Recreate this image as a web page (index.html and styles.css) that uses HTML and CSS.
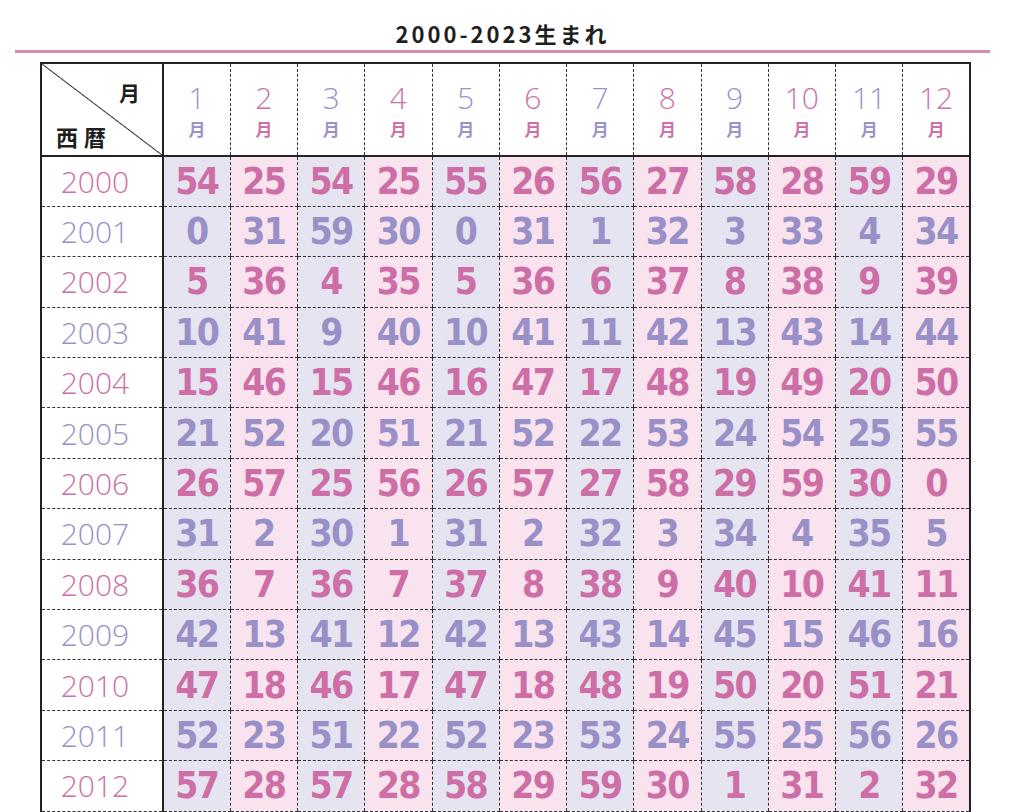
FILE: index.html
```html
<!DOCTYPE html>
<html lang="ja">
<head>
<meta charset="utf-8">
<title>2000-2023生まれ</title>
<link rel="stylesheet" href="styles.css">
</head>
<body>
<div class="page">
  <h1 class="title">2000-2023生まれ</h1>
  <div class="rule"></div>
  <table class="chart">
    <colgroup>
      <col class="c-year">
      <col class="c-m"><col class="c-m"><col class="c-m"><col class="c-m"><col class="c-m"><col class="c-m">
      <col class="c-m"><col class="c-m"><col class="c-m"><col class="c-m"><col class="c-m"><col class="c-m">
    </colgroup>
    <thead>
      <tr class="head">
        <th class="corner"><div class="corner-in"><span class="c-month">月</span><span class="c-year-l">西暦</span></div></th>
        <th class="mh pu"><span class="mn">1</span><span class="mk">月</span></th>
        <th class="mh pk"><span class="mn">2</span><span class="mk">月</span></th>
        <th class="mh pu"><span class="mn">3</span><span class="mk">月</span></th>
        <th class="mh pk"><span class="mn">4</span><span class="mk">月</span></th>
        <th class="mh pu"><span class="mn">5</span><span class="mk">月</span></th>
        <th class="mh pk"><span class="mn">6</span><span class="mk">月</span></th>
        <th class="mh pu"><span class="mn">7</span><span class="mk">月</span></th>
        <th class="mh pk"><span class="mn">8</span><span class="mk">月</span></th>
        <th class="mh pu"><span class="mn">9</span><span class="mk">月</span></th>
        <th class="mh pk"><span class="mn">10</span><span class="mk">月</span></th>
        <th class="mh pu"><span class="mn">11</span><span class="mk">月</span></th>
        <th class="mh pk"><span class="mn">12</span><span class="mk">月</span></th>
      </tr>
    </thead>
    <tbody>
      <tr class="r-pk"><th class="yr">2000</th><td>54</td><td>25</td><td>54</td><td>25</td><td>55</td><td>26</td><td>56</td><td>27</td><td>58</td><td>28</td><td>59</td><td>29</td></tr>
      <tr class="r-pu"><th class="yr">2001</th><td>0</td><td>31</td><td>59</td><td>30</td><td>0</td><td>31</td><td>1</td><td>32</td><td>3</td><td>33</td><td>4</td><td>34</td></tr>
      <tr class="r-pk"><th class="yr">2002</th><td>5</td><td>36</td><td>4</td><td>35</td><td>5</td><td>36</td><td>6</td><td>37</td><td>8</td><td>38</td><td>9</td><td>39</td></tr>
      <tr class="r-pu"><th class="yr">2003</th><td>10</td><td>41</td><td>9</td><td>40</td><td>10</td><td>41</td><td>11</td><td>42</td><td>13</td><td>43</td><td>14</td><td>44</td></tr>
      <tr class="r-pk"><th class="yr">2004</th><td>15</td><td>46</td><td>15</td><td>46</td><td>16</td><td>47</td><td>17</td><td>48</td><td>19</td><td>49</td><td>20</td><td>50</td></tr>
      <tr class="r-pu"><th class="yr">2005</th><td>21</td><td>52</td><td>20</td><td>51</td><td>21</td><td>52</td><td>22</td><td>53</td><td>24</td><td>54</td><td>25</td><td>55</td></tr>
      <tr class="r-pk"><th class="yr">2006</th><td>26</td><td>57</td><td>25</td><td>56</td><td>26</td><td>57</td><td>27</td><td>58</td><td>29</td><td>59</td><td>30</td><td>0</td></tr>
      <tr class="r-pu"><th class="yr">2007</th><td>31</td><td>2</td><td>30</td><td>1</td><td>31</td><td>2</td><td>32</td><td>3</td><td>34</td><td>4</td><td>35</td><td>5</td></tr>
      <tr class="r-pk"><th class="yr">2008</th><td>36</td><td>7</td><td>36</td><td>7</td><td>37</td><td>8</td><td>38</td><td>9</td><td>40</td><td>10</td><td>41</td><td>11</td></tr>
      <tr class="r-pu"><th class="yr">2009</th><td>42</td><td>13</td><td>41</td><td>12</td><td>42</td><td>13</td><td>43</td><td>14</td><td>45</td><td>15</td><td>46</td><td>16</td></tr>
      <tr class="r-pk"><th class="yr">2010</th><td>47</td><td>18</td><td>46</td><td>17</td><td>47</td><td>18</td><td>48</td><td>19</td><td>50</td><td>20</td><td>51</td><td>21</td></tr>
      <tr class="r-pu"><th class="yr">2011</th><td>52</td><td>23</td><td>51</td><td>22</td><td>52</td><td>23</td><td>53</td><td>24</td><td>55</td><td>25</td><td>56</td><td>26</td></tr>
      <tr class="r-pk"><th class="yr">2012</th><td>57</td><td>28</td><td>57</td><td>28</td><td>58</td><td>29</td><td>59</td><td>30</td><td>1</td><td>31</td><td>2</td><td>32</td></tr>
    </tbody>
  </table>
</div>
</body>
</html>
```
FILE: styles.css
```css
html, body {
  margin: 0;
  padding: 0;
  background: #ffffff;
  overflow: hidden;
}
body {
  font-family: "Noto Sans CJK JP", "Noto Sans", sans-serif;
  color: #222;
}
.page {
  width: 975px;
  margin-left: 15px;
}
.title {
  margin: 0;
  padding-top: 19px;
  height: 31px;
  line-height: 28px;
  text-align: center;
  font-family: "Noto Sans CJK JP", sans-serif;
  font-weight: 700;
  font-size: 22px;
  letter-spacing: 3px;
  color: #1f1f1f;
}
.rule {
  height: 3px;
  background: #d58bb3;
}
.chart {
  margin-top: 9px;
  margin-left: 25px;
  width: 929px;
  table-layout: fixed;
  border-collapse: collapse;
  border: 2.5px solid #222;
  border-bottom: none;
}
.c-year { width: 122px; }
.c-m { width: 67.25px; }

.chart th, .chart td {
  padding: 0;
  text-align: center;
  vertical-align: middle;
  border-left: 1px dashed #333;
  border-top: 1px dashed #333;
  border-bottom: 1px dashed #333;
}
.head { height: 93px; }
.chart tbody tr { height: 50.4px; }

.corner {
  border-right: 2.5px solid #222 !important;
  border-bottom: 2.5px solid #222 !important;
  background: linear-gradient(to top right, transparent calc(50% - 1px), #333 50%, transparent calc(50% + 1px));
}
.corner-in {
  display: flex;
  flex-direction: column;
  height: 86px;
  padding: 0 22px 0 14px;
  font-weight: 700;
  color: #1f1f1f;
}
.c-month {
  align-self: flex-end;
  font-size: 21px;
  line-height: 24px;
  margin-top: 13px;
}
.c-year-l {
  align-self: flex-start;
  font-size: 22px;
  line-height: 26px;
  margin-top: auto;
  margin-bottom: 4px;
  letter-spacing: 6px;
}
.mh {
  border-bottom: 2.5px solid #222 !important;
  background: #fff;
}
.mn {
  display: block;
  font-family: "Open Sans", sans-serif;
  font-weight: 300;
  font-size: 30px;
  line-height: 34px;
}
.mk {
  display: block;
  font-size: 17px;
  font-weight: 700;
  line-height: 20px;
  margin-top: 4px;
}
.pu { color: #9a92c9; }
.pk { color: #cd72a6; }

.yr {
  border-right: 2.5px solid #222;
  font-family: "Open Sans", sans-serif;
  font-weight: 300;
  font-size: 30px;
  padding-right: 14px !important;
  background: #fff;
}
.chart td {
  font-family: "DejaVu Sans Condensed", sans-serif;
  font-weight: 700;
  font-size: 37px;
  letter-spacing: -1.5px;
}
.chart td:nth-child(even) { background: #e7e4f2; }
.chart td:nth-child(odd) { background: #f8e3ee; }
.r-pk .yr, .r-pk td { color: #cd6fa6; }
.r-pu .yr, .r-pu td { color: #9990c8; }
```
